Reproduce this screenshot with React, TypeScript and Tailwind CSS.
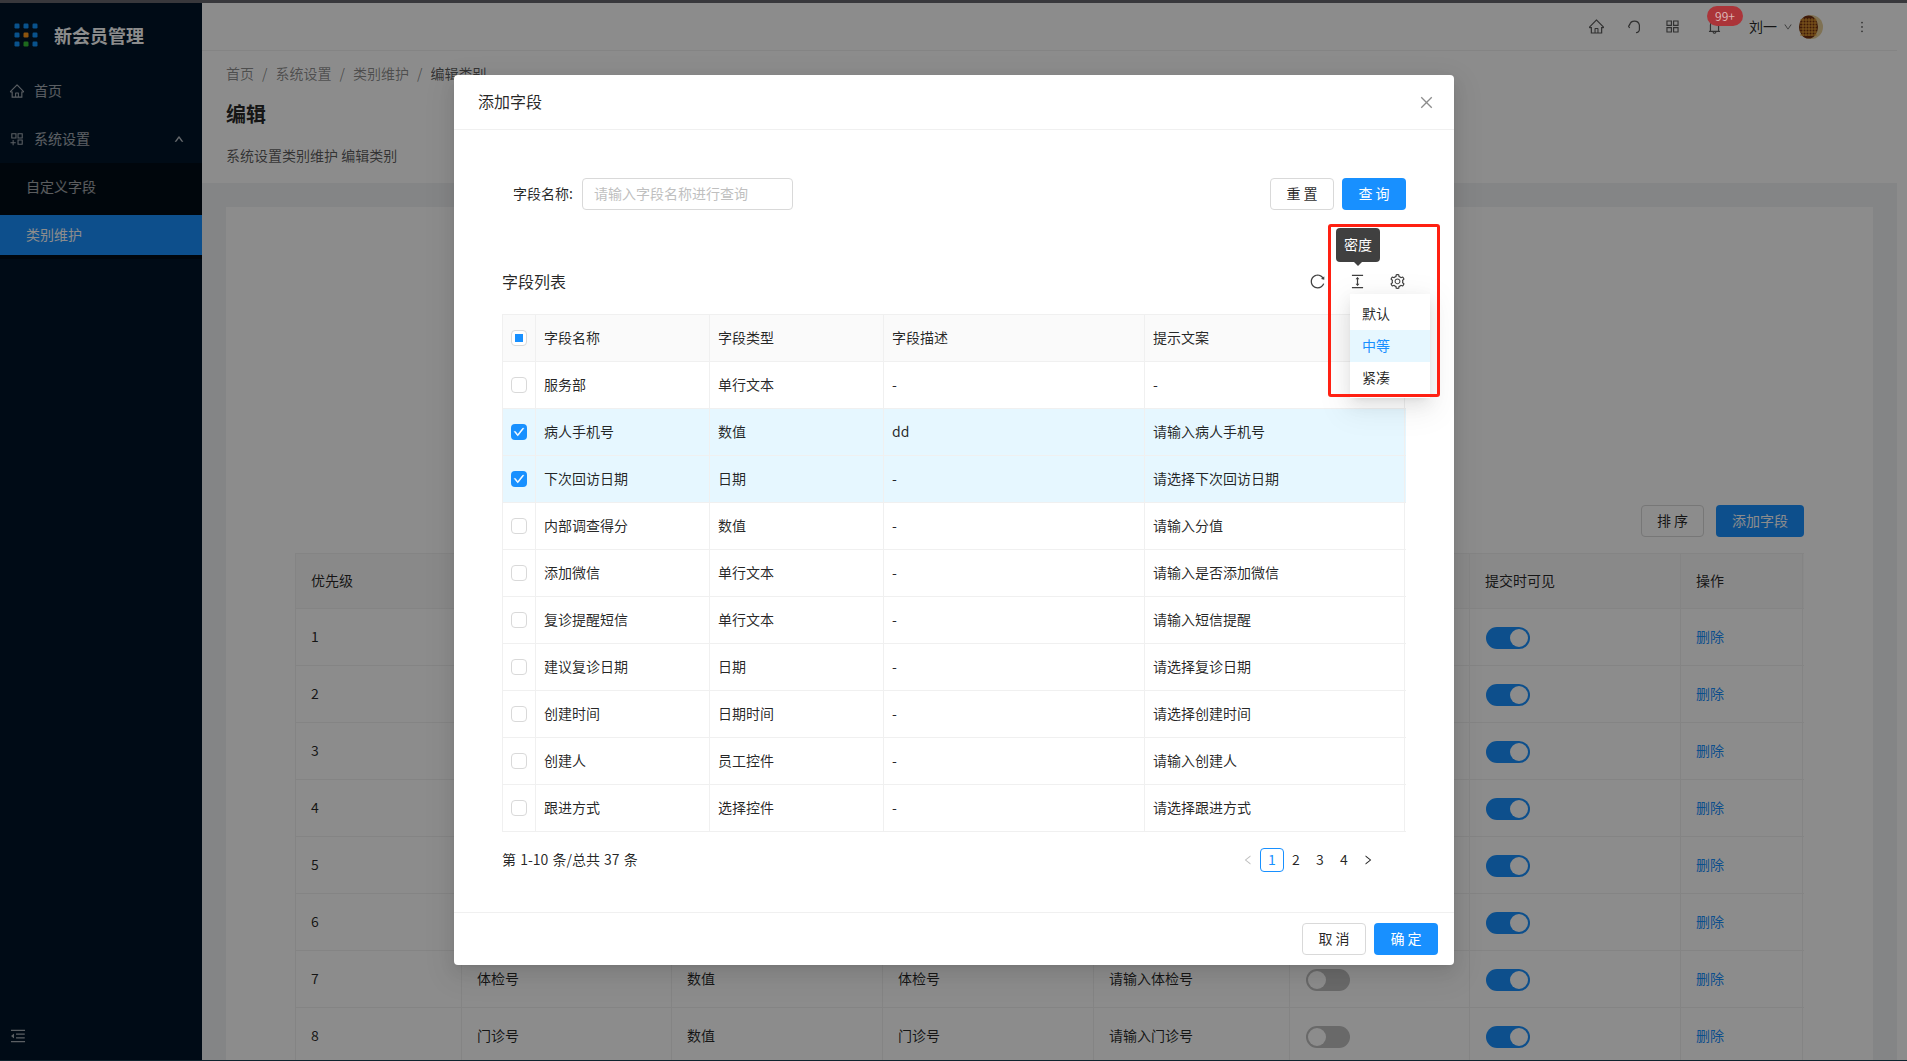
import * as React from 'react';
import {
  AiOutlineHome,
  AiOutlineAppstore,
  AiOutlineAppstoreAdd,
  AiOutlineBell,
  AiOutlineDown,
  AiOutlineUp,
  AiOutlineMore,
  AiOutlineMenuFold,
  AiOutlineClose,
  AiOutlineReload,
  AiOutlineColumnHeight,
  AiOutlineSetting,
  AiOutlineLeft,
  AiOutlineRight,
  AiOutlineCheck,
} from 'react-icons/ai';

const fieldRows = [
  { name: '服务部', type: '单行文本', desc: '-', hint: '-', checked: false },
  { name: '病人手机号', type: '数值', desc: 'dd', hint: '请输入病人手机号', checked: true },
  { name: '下次回访日期', type: '日期', desc: '-', hint: '请选择下次回访日期', checked: true },
  { name: '内部调查得分', type: '数值', desc: '-', hint: '请输入分值', checked: false },
  { name: '添加微信', type: '单行文本', desc: '-', hint: '请输入是否添加微信', checked: false },
  { name: '复诊提醒短信', type: '单行文本', desc: '-', hint: '请输入短信提醒', checked: false },
  { name: '建议复诊日期', type: '日期', desc: '-', hint: '请选择复诊日期', checked: false },
  { name: '创建时间', type: '日期时间', desc: '-', hint: '请选择创建时间', checked: false },
  { name: '创建人', type: '员工控件', desc: '-', hint: '请输入创建人', checked: false },
  { name: '跟进方式', type: '选择控件', desc: '-', hint: '请选择跟进方式', checked: false },
];

const categoryRows = [
  { no: 1 },
  { no: 2 },
  { no: 3 },
  { no: 4 },
  { no: 5 },
  { no: 6 },
  { no: 7, name: '体检号', type: '数值', desc: '体检号', hint: '请输入体检号' },
  { no: 8, name: '门诊号', type: '数值', desc: '门诊号', hint: '请输入门诊号' },
];

const fieldGrid = 'grid grid-cols-[33px_174px_174px_261px_260px]';
const categoryGrid = 'grid grid-cols-[166px_210px_211px_211px_196px_180px_211px_122px]';

function Logo() {
  const xs = [5, 14, 23];
  const blue = '#1296ff';
  return (
    <svg width="28" height="28" viewBox="0 0 28 28">
      {xs.map((y, r) =>
        xs.map((x, c) => {
          let fill = blue;
          if (r === 1 && c === 1) fill = '#ff9a1b';
          if (r === 2 && c === 1) fill = '#36bf36';
          return <rect key={`${r}${c}`} x={x - 2.5} y={y - 2.5} width="5" height="5" rx="1.2" fill={fill} />;
        }),
      )}
    </svg>
  );
}

function Avatar() {
  return (
    <svg width="24" height="24" viewBox="0 0 24 24">
      <circle cx="12" cy="12" r="12" fill="#e8cf9a" />
      <ellipse cx="9.5" cy="12" rx="9.5" ry="11.5" fill="#74300f" />
      {[4, 7, 10, 13, 16].map((x) => (
        <path key={x} d={`M${x} 3V21`} stroke="#f2ad3a" strokeWidth="0.9" />
      ))}
      {[5, 8, 11, 14, 17, 20].map((y) => (
        <path key={y} d={`M1 ${y}H18`} stroke="#f2ad3a" strokeWidth="0.9" />
      ))}
    </svg>
  );
}

function HeadsetIcon() {
  return (
    <svg width="17" height="17" viewBox="0 0 17 17" fill="none" stroke="currentColor" strokeWidth="1.2">
      <path d="M3.6 7.2a5 5 0 0 1 9.8 0v4.3a3 3 0 0 1-3.4 3" />
      <path d="M3.6 6.6 2.6 8.2l1 1.8" />
    </svg>
  );
}

function Sidebar() {
  return (
    <aside className="flex w-[202px] shrink-0 flex-col bg-[#001529] text-sm text-white/65">
      <div className="flex h-16 items-center pl-[12px]">
        <Logo />
        <span className="ml-[14px] text-lg leading-none font-bold text-white">新会员管理</span>
      </div>
      <div className="pt-1">
        <div className="flex h-10 items-center pl-[9px]">
          <AiOutlineHome className="mr-[9px] h-4 w-4" />
          <span className="pb-[2px]">首页</span>
        </div>
        <div className="mt-2 flex h-10 items-center pr-[18px] pl-[9px]">
          <AiOutlineAppstoreAdd className="mr-[9px] h-4 w-4" />
          <span className="flex-1 pb-[2px]">系统设置</span>
          <AiOutlineUp className="h-[10px] w-[10px] stroke-[80]" />
        </div>
        <div className="mt-1 bg-[#000c17] pt-1 pb-1">
          <div className="flex h-10 items-center pb-[2px] pl-[26px]">自定义字段</div>
          <div className="mt-2 flex h-10 items-center bg-[#1890ff] pb-[2px] pl-[26px] text-white">类别维护</div>
        </div>
      </div>
      <div className="mt-auto flex h-[44px] items-start pt-[11px] pl-[9px]">
        <AiOutlineMenuFold className="h-[18px] w-[18px]" />
      </div>
    </aside>
  );
}

function Topbar() {
  return (
    <header className="flex h-12 shrink-0 items-center justify-end border-b border-[#f0f0f0] bg-white pr-[27px] text-[rgba(0,0,0,0.65)]">
      <AiOutlineHome className="h-[17px] w-[17px]" />
      <span className="ml-[21px]">
        <HeadsetIcon />
      </span>
      <AiOutlineAppstore className="ml-[21px] h-[17px] w-[17px]" />
      <div className="relative ml-[25px] flex w-[43px] justify-start">
        <AiOutlineBell className="h-[17px] w-[17px]" />
      </div>
      <span className="pb-[2px] text-sm text-[rgba(0,0,0,0.85)]">刘一</span>
      <AiOutlineDown className="ml-[6px] h-[10px] w-[10px]" />
      <div className="ml-[6px]">
        <Avatar />
      </div>
      <AiOutlineMore className="ml-[31px] h-4 w-4" />
    </header>
  );
}

function PageHead() {
  const crumbs = ['首页', '系统设置', '类别维护'];
  return (
    <section className="h-[132px] shrink-0 bg-white px-6 pt-[11px]">
      <div className="flex h-[22px] items-center text-sm text-[rgba(0,0,0,0.45)]">
        {crumbs.map((c) => (
          <React.Fragment key={c}>
            <span>{c}</span>
            <span className="px-2">/</span>
          </React.Fragment>
        ))}
        <span className="text-[rgba(0,0,0,0.65)]">编辑类别</span>
      </div>
      <div className="mt-[15px] flex h-[32px] items-center pb-[2px] text-xl font-bold text-[rgba(0,0,0,0.85)]">编辑</div>
      <div className="mt-[13px] flex h-[22px] items-center text-sm text-[rgba(0,0,0,0.65)]">
        系统设置类别维护 编辑类别
      </div>
    </section>
  );
}

function Toggle({ on }: { on: boolean }) {
  return (
    <span
      className={
        on
          ? 'flex h-[22px] w-[44px] items-center justify-end rounded-full bg-[#1890ff] px-[2px]'
          : 'flex h-[22px] w-[44px] items-center justify-start rounded-full bg-[#bfbfbf] px-[2px]'
      }
    >
      <span className="h-[18px] w-[18px] rounded-full bg-white" />
    </span>
  );
}

function CategoryTable() {
  const cell = 'flex items-center border-r border-[#f0f0f0] px-[15px] pb-[2px]';
  const toggleCell = 'flex items-center border-r border-[#f0f0f0] pt-[2px] pl-[16px]';
  return (
    <div className="border-t border-l border-[#f0f0f0] text-sm text-[rgba(0,0,0,0.85)]">
      <div className={`${categoryGrid} h-[55px] border-b border-[#f0f0f0] bg-[#fafafa]`}>
        <div className={cell}>优先级</div>
        <div className={cell} />
        <div className={cell} />
        <div className={cell} />
        <div className={cell} />
        <div className={cell} />
        <div className={cell}>提交时可见</div>
        <div className={cell}>操作</div>
      </div>
      {categoryRows.map((r) => (
        <div key={r.no} className={`${categoryGrid} h-[57px] border-b border-[#f0f0f0]`}>
          <div className={cell}>{r.no}</div>
          <div className={cell}>{r.name}</div>
          <div className={cell}>{r.type}</div>
          <div className={cell}>{r.desc}</div>
          <div className={cell}>{r.hint}</div>
          <div className={toggleCell}>
            <Toggle on={false} />
          </div>
          <div className={toggleCell}>
            <Toggle on />
          </div>
          <div className={`${cell} text-[#1890ff]`}>删除</div>
        </div>
      ))}
    </div>
  );
}

function Page() {
  return (
    <div className="flex min-w-0 flex-1 flex-col overflow-hidden bg-[#f0f2f5]">
      <Topbar />
      <PageHead />
      <main className="flex-1 p-6">
        <div className="bg-white px-[69px] pt-[298px]">
          <div className="mb-4 flex justify-end gap-3 text-sm">
            <button className="h-8 w-[63px] rounded-sm border border-[#d9d9d9] bg-white pb-[2px] text-[rgba(0,0,0,0.85)]">
              排 序
            </button>
            <button className="h-8 w-[88px] rounded-sm bg-[#1890ff] pb-[2px] text-white">添加字段</button>
          </div>
          <CategoryTable />
        </div>
      </main>
    </div>
  );
}

function Checkbox({ state }: { state: 'on' | 'off' | 'some' }) {
  if (state === 'on') {
    return (
      <span className="flex h-4 w-4 items-center justify-center rounded-sm bg-[#1890ff] text-white">
        <AiOutlineCheck className="h-3 w-3 stroke-[50]" />
      </span>
    );
  }
  return (
    <span className="flex h-4 w-4 items-center justify-center rounded-sm border border-[#d9d9d9] bg-white">
      {state === 'some' && <span className="h-2 w-2 bg-[#1890ff]" />}
    </span>
  );
}

function FieldTable() {
  const box = 'flex items-center justify-center border-r border-[#f0f0f0]';
  const cell = 'flex items-center border-r border-[#f0f0f0] px-2 pb-[2px]';
  return (
    <div className="w-[904px] border-t border-l border-[#f0f0f0] text-sm text-[rgba(0,0,0,0.85)]">
      <div className={`${fieldGrid} h-[47px] border-b border-[#f0f0f0] bg-[#fafafa]`}>
        <div className={box}>
          <Checkbox state="some" />
        </div>
        <div className={cell}>字段名称</div>
        <div className={cell}>字段类型</div>
        <div className={cell}>字段描述</div>
        <div className={cell}>提示文案</div>
      </div>
      {fieldRows.map((r) => (
        <div
          key={r.name}
          className={`${fieldGrid} h-[47px] border-b border-[#f0f0f0] ${r.checked ? 'bg-[#e6f7ff]' : 'bg-white'}`}
        >
          <div className={box}>
            <Checkbox state={r.checked ? 'on' : 'off'} />
          </div>
          <div className={cell}>{r.name}</div>
          <div className={cell}>{r.type}</div>
          <div className={cell}>{r.desc}</div>
          <div className={cell}>{r.hint}</div>
        </div>
      ))}
    </div>
  );
}

function Pagination() {
  return (
    <div className="mt-4 flex h-6 w-[904px] items-center justify-between pr-[26px] text-sm text-[rgba(0,0,0,0.85)]">
      <span className="pb-[2px] [word-spacing:1px]">第 1-10 条/总共 37 条</span>
      <div className="flex items-center">
        <span className="flex w-6 justify-center text-[#bfbfbf]">
          <AiOutlineLeft className="h-3 w-3" />
        </span>
        <span className="flex h-6 w-6 items-center justify-center rounded-sm border border-[#1890ff] pb-[2px] text-[#1890ff]">
          1
        </span>
        {[2, 3, 4].map((n) => (
          <span key={n} className="flex h-6 w-6 items-center justify-center pb-[2px]">
            {n}
          </span>
        ))}
        <span className="flex w-6 justify-center">
          <AiOutlineRight className="h-3 w-3" />
        </span>
      </div>
    </div>
  );
}

function DensityPopup() {
  return (
    <>
      <div className="absolute top-[153px] left-[882px] z-10 flex h-[34px] w-[44px] items-center justify-center rounded-sm bg-[#404040] pb-[2px] text-sm text-white">
        密度
        <span className="absolute top-full left-1/2 -ml-1 border-x-4 border-t-4 border-x-transparent border-t-[#404040]" />
      </div>
      <div className="absolute top-[219px] left-[896px] z-10 w-20 bg-white py-1 text-sm text-[rgba(0,0,0,0.85)] shadow-[0_3px_6px_-4px_rgba(0,0,0,0.12),0_6px_16px_rgba(0,0,0,0.08),0_9px_28px_8px_rgba(0,0,0,0.05)]">
        <div className="flex h-8 items-center pb-[2px] pl-3">默认</div>
        <div className="flex h-8 items-center bg-[#e6f7ff] pb-[2px] pl-3 text-[#1890ff]">中等</div>
        <div className="flex h-8 items-center pb-[2px] pl-3">紧凑</div>
      </div>
      <div className="pointer-events-none absolute top-[149px] left-[874px] z-20 h-[173px] w-[112px] rounded-[3px] border-[3px] border-[#ff2012]" />
    </>
  );
}

function FieldModal() {
  return (
    <div className="relative ml-[454px] h-[890px] w-[1000px] rounded-sm bg-white shadow-[0_3px_6px_-4px_rgba(0,0,0,0.12),0_6px_16px_rgba(0,0,0,0.08),0_9px_28px_8px_rgba(0,0,0,0.05)]">
      <div className="flex h-[55px] items-center justify-between border-b border-[#f0f0f0] pr-[19px] pl-6 text-base text-[rgba(0,0,0,0.85)]">
        <span className="pb-[2px]">添加字段</span>
        <AiOutlineClose className="h-[17px] w-[17px] text-[rgba(0,0,0,0.45)]" />
      </div>
      <div className="h-[782px] pt-[48px] pl-[48px]">
        <div className="flex h-8 w-[904px] items-center text-sm">
          <label className="ml-[11px] w-[69px] pb-[2px] whitespace-nowrap text-[rgba(0,0,0,0.85)]">字段名称:</label>
          <input
            readOnly
            placeholder="请输入字段名称进行查询"
            className="h-8 w-[211px] rounded-sm border border-[#d9d9d9] px-[11px] pb-[2px] outline-none placeholder:text-[#bfbfbf]"
          />
          <button className="ml-auto h-8 w-16 rounded-sm border border-[#d9d9d9] pb-[2px] text-[rgba(0,0,0,0.85)]">
            重 置
          </button>
          <button className="ml-2 h-8 w-16 rounded-sm bg-[#1890ff] pb-[2px] text-white">查 询</button>
        </div>
        <div className="mt-[56px] flex h-[48px] w-[904px] items-start justify-between pt-[3px]">
          <span className="text-base leading-6 text-[rgba(0,0,0,0.85)]">字段列表</span>
          <div className="flex h-[25px] items-center gap-[23px] text-[17px] text-[rgba(0,0,0,0.75)]">
            <AiOutlineReload />
            <AiOutlineColumnHeight />
            <AiOutlineSetting />
          </div>
        </div>
        <FieldTable />
        <Pagination />
      </div>
      <div className="flex h-[53px] items-center justify-end gap-2 border-t border-[#f0f0f0] pr-4 text-sm">
        <button className="h-8 w-16 rounded-sm border border-[#d9d9d9] pb-[2px] text-[rgba(0,0,0,0.85)]">取 消</button>
        <button className="h-8 w-16 rounded-sm bg-[#1890ff] pb-[2px] text-white">确 定</button>
      </div>
      <DensityPopup />
    </div>
  );
}

export default function App() {
  return (
    <div className="flex h-screen flex-col overflow-hidden bg-white font-['Noto_Sans_CJK_SC','Liberation_Sans',sans-serif]">
      <div className="h-[3px] shrink-0 bg-[#38383c]" />
      <div className="relative flex min-h-0 flex-1">
        <Sidebar />
        <Page />
        <div className="w-[10px] shrink-0 bg-white" />
        <div className="absolute inset-0 z-40 bg-black/45 pt-[72px]">
          <FieldModal />
        </div>
        <span className="absolute top-[3px] left-[1707px] z-50 flex h-5 w-[36px] items-center justify-center rounded-full bg-[#ab3439] text-xs text-[#dcb4b4]">
          99+
        </span>
      </div>
      <div className="h-px shrink-0 bg-[#10242f]" />
    </div>
  );
}
